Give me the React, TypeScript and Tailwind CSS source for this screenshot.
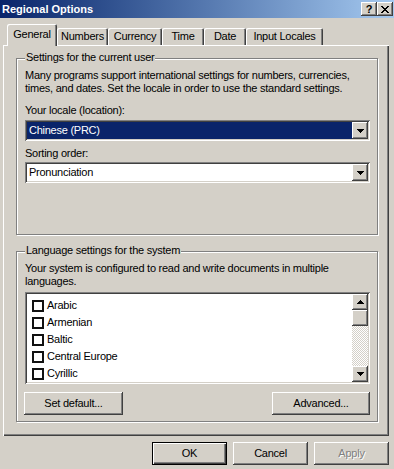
import React from "react";

const raised =
  "bg-[#d4d0c8] shadow-[inset_-1px_-1px_#404040,inset_1px_1px_#ffffff,inset_-2px_-2px_#808080,inset_2px_2px_#d4d0c8]";
const sunken =
  "shadow-[inset_1px_1px_#808080,inset_-1px_-1px_#ffffff,inset_2px_2px_#404040,inset_-2px_-2px_#d4d0c8]";
const etched = "border border-[#808080] shadow-[inset_1px_1px_#ffffff,1px_1px_#ffffff]";

const DownArrow = () => (
  <svg width="7" height="4" viewBox="0 0 7 4" shapeRendering="crispEdges">
    <path d="M0 0h7v1H0zM1 1h5v1H1zM2 2h3v1H2zM3 3h1v1H3z" fill="#000" />
  </svg>
);

const UpArrow = () => (
  <svg width="7" height="4" viewBox="0 0 7 4" shapeRendering="crispEdges">
    <path d="M3 0h1v1H3zM2 1h3v1H2zM1 2h5v1H1zM0 3h7v1H0z" fill="#000" />
  </svg>
);

const CloseGlyph = () => (
  <svg width="8" height="7" viewBox="0 0 8 7" shapeRendering="crispEdges">
    <path
      d="M0 0h2v1H0zM6 0h2v1H6zM1 1h2v1H1zM5 1h2v1H5zM2 2h4v1H2zM3 3h2v1H3zM2 4h4v1H2zM1 5h2v1H1zM5 5h2v1H5zM0 6h2v1H0zM6 6h2v1H6z"
      fill="#000"
    />
  </svg>
);

const Combo = ({ value, selected }: { value: string; selected?: boolean }) => (
  <div className={`w-[345px] h-[21px] bg-white p-[2px] flex ${sunken}`}>
    <div
      className={`flex-1 flex items-center pl-[2px] leading-[13px] ${
        selected ? "bg-[#0a246a] text-white" : "text-black"
      }`}
    >
      {value}
    </div>
    <div className={`w-[16px] h-[17px] flex items-center justify-center ${raised}`}>
      <DownArrow />
    </div>
  </div>
);

const Button = ({ label, w, disabled }: { label: string; w: string; disabled?: boolean }) => (
  <div className={`${w} h-[23px] flex items-center justify-center ${raised}`}>
    <span className={disabled ? "text-[#808080] [text-shadow:1px_1px_#ffffff]" : "text-black"}>
      {label}
    </span>
  </div>
);

const tabs = [
  { name: "General", w: "w-[50px]" },
  { name: "Numbers", w: "w-[51px]" },
  { name: "Currency", w: "w-[54px]" },
  { name: "Time", w: "w-[42px]" },
  { name: "Date", w: "w-[42px]" },
  { name: "Input Locales", w: "w-[77px]" },
];

const languages = ["Arabic", "Armenian", "Baltic", "Central Europe", "Cyrillic"];

export default function App() {
  return (
    <div className="w-[394px] h-[469px] overflow-hidden bg-[#d4d0c8] font-['Liberation_Sans',Arial,sans-serif] text-[11px] leading-[13px] tracking-[-0.25px] text-black flex flex-col">
      {/* title bar */}
      <div className="h-[18px] bg-linear-to-r from-[#0a246a] to-[#a6caf0] flex items-center justify-between pl-[2px] pr-[1px]">
        <span className="text-white font-bold text-[11px] tracking-normal">Regional Options</span>
        <div className="flex">
          <div className={`w-[16px] h-[14px] flex items-center justify-center font-bold text-[11px] leading-[11px] ${raised}`}>
            ?
          </div>
          <div className={`w-[16px] h-[14px] flex items-center justify-center ${raised}`}>
            <CloseGlyph />
          </div>
        </div>
      </div>

      {/* tabs */}
      <div className="mt-[6px] h-[21px] flex items-end pl-[7px]">
        {tabs.map((t, i) =>
          i === 0 ? (
            <div
              key={t.name}
              className={`${t.w} h-[22px] -mb-[1px] relative z-10 bg-[#d4d0c8] rounded-t-[2px] flex items-start justify-center pt-[4px] shadow-[inset_1px_1px_#ffffff,inset_-1px_0_#404040,inset_-2px_0_#808080]`}
            >
              {t.name}
            </div>
          ) : (
            <div
              key={t.name}
              className={`${t.w} h-[17px] rounded-t-[2px] flex items-center justify-center shadow-[inset_1px_1px_#ffffff,inset_-1px_0_#404040,inset_-2px_0_#808080]`}
            >
              {t.name}
            </div>
          )
        )}
      </div>

      {/* page */}
      <div className="ml-[3px] w-[386px] h-[391px] pt-[13px] pl-[13px] shadow-[inset_1px_1px_#ffffff,inset_-1px_-1px_#404040,inset_-2px_-2px_#808080]">
        <div className={`w-[362px] h-[177px] ${etched}`}>
          <span className="block w-fit -mt-[8px] ml-[8px] px-[1px] bg-[#d4d0c8]">
            Settings for the current user
          </span>
          <div className="pl-[8px]">
            <p className="mt-[5px]">
              Many programs support international settings for numbers, currencies,
              <br />
              times, and dates. Set the locale in order to use the standard settings.
            </p>
            <div className="mt-[9px]">Your locale (location):</div>
            <div className="mt-[3px]">
              <Combo value="Chinese (PRC)" selected />
            </div>
            <div className="mt-[6px]">Sorting order:</div>
            <div className="mt-[2px]">
              <Combo value="Pronunciation" />
            </div>
          </div>
        </div>

        <div className={`mt-[16px] w-[362px] h-[171px] ${etched}`}>
          <span className="block w-fit -mt-[8px] ml-[8px] px-[1px] bg-[#d4d0c8]">
            Language settings for the system
          </span>
          <div className="pl-[8px] pr-[7px]">
            <p className="mt-[5px]">
              Your system is configured to read and write documents in multiple
              <br />
              languages.
            </p>
            <div className={`mt-[4px] w-[345px] h-[92px] bg-white p-[2px] flex ${sunken}`}>
              <div className="flex-1 overflow-hidden pt-[3px]">
                {languages.map((l) => (
                  <div key={l} className="h-[17px] flex items-center pl-[5px] gap-[3px]">
                    <div className="w-[12px] h-[12px] border-2 border-[#111] bg-white" />
                    <span>{l}</span>
                  </div>
                ))}
              </div>
              <div className="w-[16px] flex flex-col">
                <div className={`h-[16px] flex items-center justify-center ${raised}`}>
                  <UpArrow />
                </div>
                <div className={`h-[16px] ${raised}`} />
                <div className="flex-1 bg-[repeating-conic-gradient(#ffffff_0_25%,#d4d0c8_0_50%)] bg-[length:2px_2px]" />
                <div className={`h-[16px] flex items-center justify-center ${raised}`}>
                  <DownArrow />
                </div>
              </div>
            </div>
            <div className="mt-[8px] flex justify-between -ml-[1px]">
              <Button label="Set default..." w="w-[99px]" />
              <Button label="Advanced..." w="w-[98px]" />
            </div>
          </div>
        </div>
      </div>

      {/* dialog buttons */}
      <div className="mt-[6px] flex justify-end gap-[6px] pr-[5px]">
        <div className="w-[75px] h-[23px] flex items-center justify-center bg-[#d4d0c8] shadow-[inset_0_0_0_1px_#000000,inset_2px_2px_#ffffff,inset_-2px_-2px_#404040,inset_-3px_-3px_#808080]">
          OK
        </div>
        <Button label="Cancel" w="w-[75px]" />
        <Button label="Apply" w="w-[75px]" disabled />
      </div>
    </div>
  );
}
